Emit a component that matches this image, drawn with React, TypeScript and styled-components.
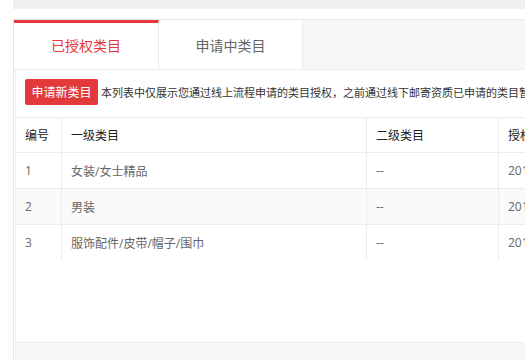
import styled, { createGlobalStyle } from "styled-components";

const GlobalStyle = createGlobalStyle`
  html, body {
    margin: 0;
    padding: 0;
    background: #fff;
    overflow: hidden;
  }
  body {
    font-family: "Open Sans", "Noto Sans CJK SC", sans-serif;
  }
`;

const Page = styled.div`
  width: 525px;
  height: 360px;
  padding-left: 13px;
  box-sizing: border-box;
  overflow: hidden;
`;

const TopBar = styled.div`
  height: 9px;
  background: #f0f0f0;
  margin-bottom: 10px;
`;

const Card = styled.div`
  border-top: 1px solid #e8e8e8;
  border-left: 1px solid #e4e4e4;
  height: 341px;
  display: flex;
  flex-direction: column;
  box-sizing: border-box;
`;

const TabBar = styled.div`
  display: flex;
  height: 50px;
  flex-shrink: 0;
  background: #f7f7f7;
  border-bottom: 1px solid #ececec;
  box-sizing: border-box;
`;

const Tab = styled.div<{ active?: boolean }>`
  width: ${(p) => (p.active ? "145px" : "144px")};
  display: flex;
  align-items: center;
  justify-content: center;
  background: #fff;
  box-sizing: border-box;
  font-size: 14px;
  color: ${(p) => (p.active ? "#e4393c" : "#666")};
  border-top: 3px solid ${(p) => (p.active ? "#e4393c" : "transparent")};
  border-right: 1px solid #ececec;
  padding-bottom: 2px;
`;

const Body = styled.div`
  flex: 1;
  margin-left: 1px;
  border-left: 1px solid #f0f0f0;
  display: flex;
  flex-direction: column;
  overflow: hidden;
`;

const Toolbar = styled.div`
  display: flex;
  align-items: center;
  gap: 3px;
  padding: 9px 0 12px 9px;
  height: 47px;
  flex-shrink: 0;
  box-sizing: border-box;
  white-space: nowrap;
`;

const ApplyButton = styled.button`
  flex-shrink: 0;
  height: 26px;
  width: 73px;
  padding: 0;
  border: none;
  border-radius: 2px;
  background: #e23a3b;
  color: #fff;
  font-family: inherit;
  font-size: 12px;
  cursor: pointer;
`;

const Notice = styled.span`
  flex-shrink: 0;
  font-size: 11px;
  color: #333;
`;

const Table = styled.div`
  width: 700px;
  flex-shrink: 0;
  border-top: 1px solid #ececec;
`;

const Row = styled.div<{ striped?: boolean; head?: boolean }>`
  display: grid;
  grid-template-columns: 45px 305px 132px 1fr;
  height: ${(p) => (p.head ? "34px" : "36px")};
  background: ${(p) => (p.striped ? "#fafafa" : "#fff")};
  border-top: ${(p) => (p.head ? "none" : "1px solid #ececec")};
  box-sizing: border-box;
`;

const Cell = styled.div<{ head?: boolean }>`
  display: flex;
  align-items: center;
  padding-left: 9px;
  font-size: 12px;
  color: ${(p) => (p.head ? "#222" : "#666")};
  border-left: 1px solid #ececec;
  white-space: nowrap;
  &:first-child {
    border-left: none;
  }
`;

const Filler = styled.div`
  flex: 1;
`;

const Footer = styled.div`
  height: 17px;
  flex-shrink: 0;
  background: #f7f7f7;
  border-top: 1px solid #ececec;
`;

const rows = [
  { id: 1, first: "女装/女士精品", second: "--", time: "2019-03-12 10:21:36" },
  { id: 2, first: "男装", second: "--", time: "2019-03-12 10:21:36" },
  { id: 3, first: "服饰配件/皮带/帽子/围巾", second: "--", time: "2019-03-12 10:21:36" },
];

function App() {
  return (
    <Page>
      <GlobalStyle />
      <TopBar />
      <Card>
        <TabBar>
          <Tab active>已授权类目</Tab>
          <Tab>申请中类目</Tab>
        </TabBar>
        <Body>
          <Toolbar>
            <ApplyButton>申请新类目</ApplyButton>
            <Notice>
              本列表中仅展示您通过线上流程申请的类目授权，之前通过线下邮寄资质已申请的类目暂
            </Notice>
          </Toolbar>
          <Table>
            <Row head>
              <Cell head>编号</Cell>
              <Cell head>一级类目</Cell>
              <Cell head>二级类目</Cell>
              <Cell head>授权时间</Cell>
            </Row>
            {rows.map((r, i) => (
              <Row key={r.id} striped={i % 2 === 1}>
                <Cell>{r.id}</Cell>
                <Cell>{r.first}</Cell>
                <Cell>{r.second}</Cell>
                <Cell>{r.time}</Cell>
              </Row>
            ))}
          </Table>
          <Filler />
          <Footer />
        </Body>
      </Card>
    </Page>
  );
}

export default App;
